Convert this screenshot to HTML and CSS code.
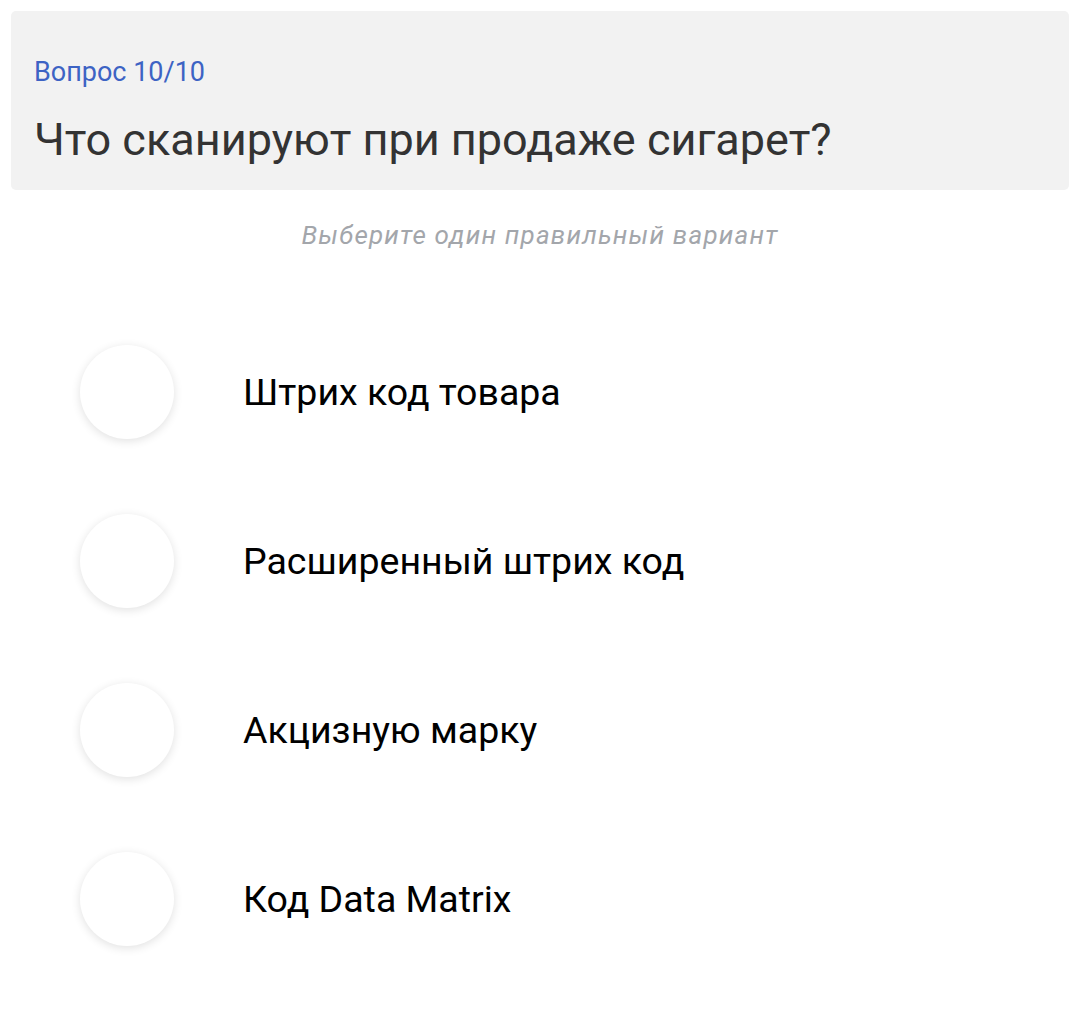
FILE: index.html
```html
<!DOCTYPE html>
<html lang="ru">
<head>
    <meta charset="UTF-8">
    <meta name="viewport" content="width=device-width, initial-scale=1.0">
    <title>Вопрос 10/10</title>
    <link rel="stylesheet" href="styles.css">
</head>
<body>
    <div class="quiz">
        <div class="question-card">
            <div class="question-counter">Вопрос 10/10</div>
            <h1 class="question-text">Что сканируют при продаже сигарет?</h1>
        </div>

        <p class="hint">Выберите один правильный вариант</p>

        <ul class="answers">
            <li class="answer">
                <span class="answer-radio"></span>
                <span class="answer-label">Штрих код товара</span>
            </li>
            <li class="answer">
                <span class="answer-radio"></span>
                <span class="answer-label">Расширенный штрих код</span>
            </li>
            <li class="answer">
                <span class="answer-radio"></span>
                <span class="answer-label">Акцизную марку</span>
            </li>
            <li class="answer">
                <span class="answer-radio"></span>
                <span class="answer-label">Код Data Matrix</span>
            </li>
        </ul>
    </div>
</body>
</html>
```

FILE: styles.css
```css
* {
    box-sizing: border-box;
    margin: 0;
    padding: 0;
    font-family: Roboto, "Noto Sans", sans-serif;
}

body {
    background-color: white;
    color: black;
    padding: 11px;
}

.question-card {
    background: #f2f2f2;
    border-radius: 5px;
    height: 179px;
    padding: 45px 23px 0;
}

.question-counter {
    font-size: 27px;
    line-height: 32px;
    color: #3d63c4;
}

.question-text {
    margin-top: 26px;
    font-size: 45px;
    line-height: 52px;
    font-weight: normal;
    color: #333333;
}

.hint {
    margin-top: 30px;
    text-align: center;
    font-size: 26px;
    line-height: 30px;
    letter-spacing: 1.2px;
    font-style: italic;
    color: #a3a6ab;
}

.answers {
    list-style: none;
    margin-top: 95px;
    padding-left: 69px;
    display: flex;
    flex-direction: column;
    gap: 75px;
}

.answer {
    display: flex;
    align-items: center;
    gap: 69px;
}

.answer-radio {
    width: 94px;
    height: 94px;
    border-radius: 50%;
    background: white;
    box-shadow: 0 2px 10px rgba(0, 0, 0, 0.12);
    flex-shrink: 0;
}

.answer-label {
    font-size: 37.5px;
    color: black;
}
```
